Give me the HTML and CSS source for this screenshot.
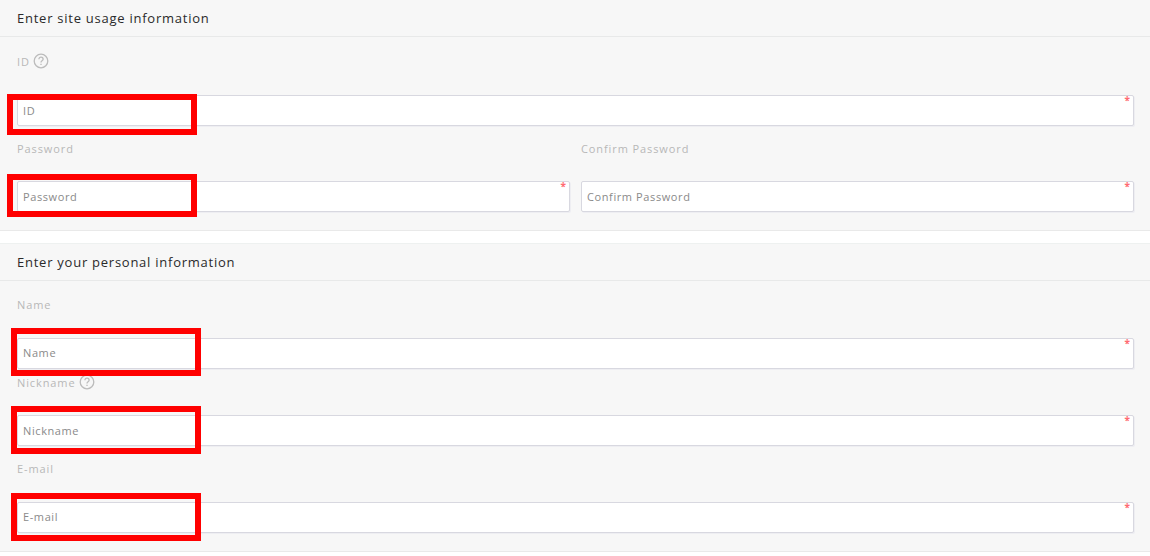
FILE: index.html
```html
<!DOCTYPE html>
<html lang="en">
<head>
<meta charset="utf-8">
<title>Sign up</title>
<link rel="stylesheet" href="styles.css">
</head>
<body>
<section class="panel panel-first">
  <h2 class="panel-title">Enter site usage information</h2>
  <div class="panel-body">
    <div class="field">
      <div class="label">ID <svg class="help" viewBox="0 0 16 16"><circle cx="8" cy="8" r="6.8"/><path d="M5.9 6.3c0-1.3 1-2.1 2.1-2.1s2.1.8 2.1 2c0 1.5-2.1 1.6-2.1 3.2"/><path d="M8 10.8v1.3"/></svg></div>
      <div class="control">
        <input class="input" placeholder="ID"><span class="req">*</span>
        <span class="mark mark-a"></span>
      </div>
    </div>
    <div class="row">
      <div class="field">
        <div class="label label-near">Password</div>
        <div class="control">
          <input class="input" placeholder="Password"><span class="req">*</span>
          <span class="mark mark-b"></span>
        </div>
      </div>
      <div class="field">
        <div class="label label-near">Confirm Password</div>
        <div class="control">
          <input class="input" placeholder="Confirm Password"><span class="req">*</span>
        </div>
      </div>
    </div>
  </div>
</section>
<section class="panel panel-second">
  <h2 class="panel-title">Enter your personal information</h2>
  <div class="panel-body">
    <div class="field field-tight">
      <div class="label">Name</div>
      <div class="control">
        <input class="input input-up" placeholder="Name"><span class="req">*</span>
        <span class="mark mark-c"></span>
      </div>
    </div>
    <div class="field">
      <div class="label label-near">Nickname <svg class="help" viewBox="0 0 16 16"><circle cx="8" cy="8" r="6.8"/><path d="M5.9 6.3c0-1.3 1-2.1 2.1-2.1s2.1.8 2.1 2c0 1.5-2.1 1.6-2.1 3.2"/><path d="M8 10.8v1.3"/></svg></div>
      <div class="control">
        <input class="input" placeholder="Nickname"><span class="req">*</span>
        <span class="mark mark-d"></span>
      </div>
    </div>
    <div class="field">
      <div class="label">E-mail</div>
      <div class="control">
        <input class="input input-up" placeholder="E-mail"><span class="req">*</span>
        <span class="mark mark-d"></span>
      </div>
    </div>
  </div>
</section>
```

FILE: styles.css
```css
* { box-sizing: border-box; }
html, body { margin: 0; padding: 0; }
body {
  background: #fff;
  font-family: "Open Sans", "Noto Sans", sans-serif;
  height: 556px;
  overflow: hidden;
}
.panel {
  background: #f7f7f7;
  border-bottom: 1px solid #e9e9e9;
}
.panel-first { height: 231px; }
.panel-second {
  height: 309px;
  margin-top: 12px;
  border-top: 1px solid #eef1f0;
}
.panel-title {
  margin: 0;
  height: 37px;
  padding-left: 17px;
  border-bottom: 1px solid #e8e9e9;
  font-size: 13px;
  font-weight: 400;
  letter-spacing: 0.75px;
  line-height: 37px;
  color: #2a2a2a;
}
.panel-body {
  padding: 15px 16px 0 17px;
}
.panel-second .panel-body { padding-top: 14px; }
.field { margin-bottom: 13px; }
.field-tight { margin-bottom: 4px; }
.row {
  display: grid;
  grid-template-columns: 1fr 1fr;
  column-gap: 11px;
}
.label {
  display: flex;
  align-items: center;
  gap: 3px;
  height: 18px;
  margin-bottom: 25px;
  font-size: 11px;
  letter-spacing: 0.9px;
  color: #b8b8b8;
}
.label-near { margin-bottom: 24px; }
.help {
  width: 16px;
  height: 16px;
  margin-top: -1px;
  fill: none;
  stroke: #bcbcbc;
  stroke-width: 1.3;
}
.control { position: relative; }
.input {
  display: block;
  width: 100%;
  height: 31px;
  padding: 0 5px;
  border: 1px solid #d8d8e0;
  border-radius: 2px;
  box-shadow: 1px 1px 0 #eeeef2;
  background: #fff;
  font-family: inherit;
  font-size: 11px;
  letter-spacing: 0.6px;
  color: #8a8a8a;
  outline: none;
}
.input-up { padding-bottom: 2px; }
.input::placeholder { color: #8a8a8a; opacity: 1; }
.req {
  position: absolute;
  top: -2px;
  right: 4px;
  font-size: 10px;
  line-height: 14px;
  font-weight: 700;
  color: #ff6b72;
}
.mark {
  position: absolute;
  border: 6px solid #ff0000;
  pointer-events: none;
}
.mark-a { left: -10px; top: -1px; width: 190px; height: 41px; }
.mark-b { left: -10px; top: -7px; width: 190px; height: 43px; }
.mark-c { left: -6px; top: -10px; width: 190px; height: 48px; }
.mark-d { left: -6px; top: -9px; width: 190px; height: 48px; }
```
